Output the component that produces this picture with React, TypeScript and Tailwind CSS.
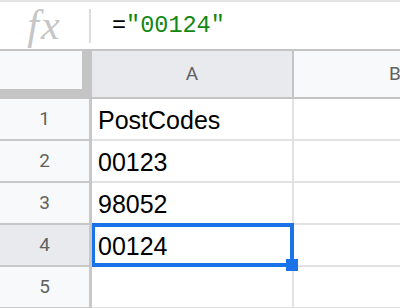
const rows = [
  { n: 1, value: "PostCodes" },
  { n: 2, value: "00123" },
  { n: 3, value: "98052" },
  { n: 4, value: "00124", selected: true },
  { n: 5, value: "" },
];

export default function App() {
  return (
    <div className="h-[308px] w-[400px] overflow-hidden bg-white font-['Liberation_Sans',Arial,sans-serif]">
      {/* formula bar */}
      <div className="flex h-[49px] items-center border-t-2 border-[#e3e3e3]">
        <div className="flex w-[89px] justify-center pb-[2px]">
          <span className="font-['Liberation_Serif',serif] text-[42px] italic leading-none tracking-[2px] text-[#c6c6c6]">
            fx
          </span>
        </div>
        <div className="h-[34px] w-[2px] bg-[#dadce0]" />
        <div className="ml-[21px] font-['Liberation_Mono',monospace] text-[23.5px] leading-none">
          <span className="text-black">=</span>
          <span className="text-[#12880f]">"00124"</span>
        </div>
      </div>

      {/* column headers */}
      <div className="flex h-[50px] w-max border-y-2 border-[#c4c4c4] font-['Roboto',sans-serif] text-[19px] text-[#616161]">
        <div className="w-[92px] shrink-0 bg-[#c4c4c4]">
          <div className="h-[38px] w-[82px] bg-[#f8f9fa]" />
        </div>
        <div className="flex w-[202px] shrink-0 items-center justify-center border-r-2 border-[#c4c4c4] bg-[#e8eaed]">
          A
        </div>
        <div className="flex w-[202px] shrink-0 items-center justify-center bg-[#f8f9fa]">
          B
        </div>
      </div>

      {/* rows */}
      {rows.map((row) => (
        <div key={row.n} className="flex h-[42px] w-max">
          <div
            className={`flex w-[92px] shrink-0 items-center justify-center border-r-[3px] border-b-2 border-[#c8c8c8] font-['Roboto',sans-serif] text-[19px] text-[#616161] ${
              row.selected ? "bg-[#e8eaed]" : "bg-[#f8f9fa]"
            }`}
          >
            {row.n}
          </div>
          <div className="relative flex w-[202px] shrink-0 items-end border-r-2 border-b-2 border-[#e2e2e2] pb-[6px] pl-[6px] text-[25px] leading-[25px] text-black">
            {row.value}
            {row.selected && (
              <>
                <div className="absolute -top-[2px] -right-[2px] -bottom-[2px] left-0 border-[4px] border-l-[3px] border-[#1a73e8]" />
                <div className="absolute top-[34px] left-[194px] z-10 h-[12px] w-[12px] bg-[#1a73e8]" />
              </>
            )}
          </div>
          <div className="w-[202px] shrink-0 border-r-2 border-b-2 border-[#e2e2e2]" />
        </div>
      ))}
    </div>
  );
}
